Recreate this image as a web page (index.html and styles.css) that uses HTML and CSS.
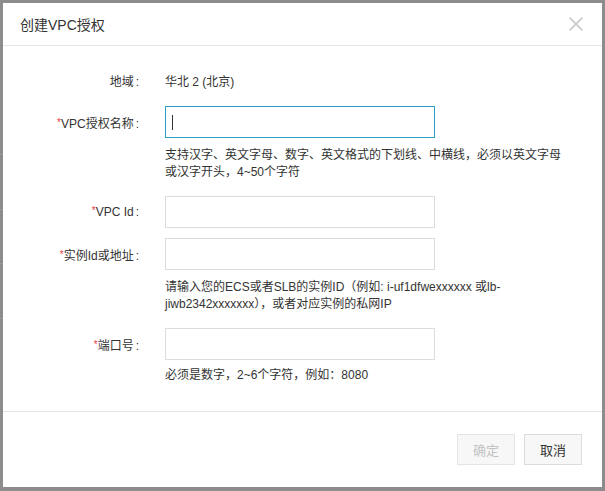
FILE: index.html
```html
<!DOCTYPE html>
<html lang="zh-CN">
<head>
<meta charset="utf-8">
<title>创建VPC授权</title>
<link rel="stylesheet" href="styles.css">
</head>
<body>
<div class="backdrop">
  <div class="dialog">
    <div class="dialog-header">
      <span class="dialog-title">创建VPC授权</span>
      <svg class="close" width="16" height="16" viewBox="0 0 16 16" aria-label="关闭">
        <path d="M1.5 1.5 L14.5 14.5 M14.5 1.5 L1.5 14.5" stroke="#c4c4c4" stroke-width="1.6" fill="none"/>
      </svg>
    </div>
    <div class="dialog-body">
      <div class="item">
        <div class="row">
          <label class="label">地域</label>
          <span class="value">华北 2 (北京)</span>
        </div>
      </div>
      <div class="item item-help">
        <div class="row">
          <label class="label"><span class="req">*</span>VPC授权名称</label>
          <div class="input focused"><span class="caret"></span></div>
        </div>
        <div class="help">支持汉字、英文字母、数字、英文格式的下划线、中横线，必须以英文字母或汉字开头，4~50个字符</div>
      </div>
      <div class="item">
        <div class="row">
          <label class="label"><span class="req">*</span>VPC Id</label>
          <div class="input"></div>
        </div>
      </div>
      <div class="item item-help">
        <div class="row">
          <label class="label"><span class="req">*</span>实例Id或地址</label>
          <div class="input"></div>
        </div>
        <div class="help">请输入您的ECS或者SLB的实例ID（例如: i-uf1dfwexxxxxx 或lb-jiwb2342xxxxxxx），或者对应实例的私网IP</div>
      </div>
      <div class="item item-last">
        <div class="row">
          <label class="label"><span class="req">*</span>端口号</label>
          <div class="input"></div>
        </div>
        <div class="help help-last">必须是数字，2~6个字符，例如：8080</div>
      </div>
    </div>
    <div class="dialog-footer">
      <button class="btn btn-disabled" disabled>确定</button>
      <button class="btn">取消</button>
    </div>
  </div>
</div>
</body>
</html>
```
FILE: styles.css
```css
html, body {
  margin: 0;
  padding: 0;
}
body {
  width: 605px;
  height: 491px;
  overflow: hidden;
  background-color: #8c8c8c;
  background-image:
    linear-gradient(#9b9b9b, #9b9b9b),
    linear-gradient(#9b9b9b, #9b9b9b),
    linear-gradient(#9b9b9b, #9b9b9b),
    linear-gradient(#9b9b9b, #9b9b9b);
  background-repeat: no-repeat;
  background-size: 3px 1px, 3px 1px, 3px 1px, 3px 1px;
  background-position: 0 154px, 0 209px, 0 263px, 0 318px;
  font-family: "Liberation Sans", "Noto Sans CJK SC", sans-serif;
  color: #333;
}
.backdrop {
  padding: 3px 0 0 3px;
}
.dialog {
  width: 599px;
  height: 484px;
  background: #fff;
  display: flex;
  flex-direction: column;
}
.dialog-header {
  height: 42px;
  border-bottom: 1px solid #e6e6e6;
  display: flex;
  align-items: center;
  justify-content: space-between;
  padding: 0 17px 0 17px;
}
.dialog-title {
  font-size: 14px;
  color: #333;
}
.close {
  display: block;
  margin-right: 1px;
}
.dialog-body {
  flex: 1;
  padding-top: 18px;
  font-size: 12px;
}
.item {
  margin-bottom: 10px;
}
.item-help {
  margin-bottom: 15px;
}
.item-last {
  margin-bottom: 0;
}
.row {
  display: flex;
  align-items: center;
  height: 32px;
}
.label {
  width: 136px;
  padding-right: 26px;
  text-align: right;
  color: #333;
}
.label::after {
  content: ":";
  margin-left: 2px;
}
.req {
  color: #e4393c;
  font-size: 10px;
  vertical-align: 2px;
}
.value {
  color: #333;
}
.input {
  width: 268px;
  height: 30px;
  border: 1px solid #dcdcdc;
  background: #fff;
  display: flex;
  align-items: center;
}
.input.focused {
  border-color: #2a9fc4;
}
.caret {
  display: block;
  width: 1px;
  height: 15px;
  background: #333;
  margin-left: 6px;
}
.help {
  margin: 9px 0 0 162px;
  width: 400px;
  line-height: 17px;
  color: #333;
}
.help-last {
  margin-top: 7px;
}
.dialog-footer {
  height: 76px;
  border-top: 1px solid #e6e6e6;
  display: flex;
  justify-content: flex-end;
  align-items: flex-start;
  gap: 9px;
  padding: 22px 20px 0 0;
  box-sizing: border-box;
}
.btn {
  width: 58px;
  height: 31px;
  border: 1px solid #dcdcdc;
  background: #f7f7f7;
  color: #333;
  font-family: "Liberation Sans", "Noto Sans CJK SC", sans-serif;
  font-size: 13px;
  padding: 0;
  cursor: pointer;
}
.btn-disabled {
  color: #c2c2c2;
  border-color: #e4e4e4;
  background: #f7f7f7;
  cursor: default;
}
```
